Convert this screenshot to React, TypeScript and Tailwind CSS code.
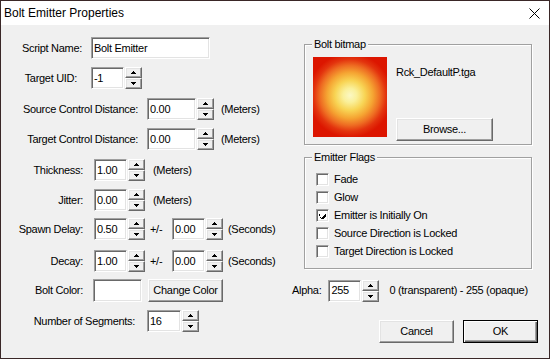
import React from 'react';

const font = "font-['Liberation_Sans',Arial,sans-serif]";

function Arrow({ down }: { down?: boolean }) {
  return (
    <svg width="5" height="3" viewBox="0 0 5 3" shapeRendering="crispEdges">
      {down ? (
        <>
          <rect x="0" y="0" width="5" height="1" fill="#000" />
          <rect x="1" y="1" width="3" height="1" fill="#000" />
          <rect x="2" y="2" width="1" height="1" fill="#000" />
        </>
      ) : (
        <>
          <rect x="2" y="0" width="1" height="1" fill="#000" />
          <rect x="1" y="1" width="3" height="1" fill="#000" />
          <rect x="0" y="2" width="5" height="1" fill="#000" />
        </>
      )}
    </svg>
  );
}

const raised =
  'bg-[#f0f0f0] border border-t-white border-l-white border-r-[#696969] border-b-[#696969] shadow-[inset_-1px_-1px_0_#a0a0a0,inset_1px_1px_0_#e3e3e3]';
const sunken =
  'bg-white border border-t-[#a0a0a0] border-l-[#a0a0a0] border-r-white border-b-white shadow-[inset_1px_1px_0_#696969,inset_-1px_-1px_0_#e3e3e3]';

function Spinner() {
  return (
    <div className="ml-[1px] flex h-[22px] w-[17px] flex-col">
      <div className={`${raised} flex h-[11px] items-center justify-center`}>
        <Arrow />
      </div>
      <div className={`${raised} flex h-[11px] items-center justify-center`}>
        <Arrow down />
      </div>
    </div>
  );
}

function Edit({ value, w }: { value: string; w: string }) {
  return (
    <div className={`${sunken} ${w} flex h-[22px] items-center pl-[2px] leading-none`}>
      {value}
    </div>
  );
}

function Button({ children, w, def }: { children: React.ReactNode; w: string; def?: boolean }) {
  return (
    <div
      className={`${w} flex h-[23px] items-center justify-center ${
        def
          ? 'border border-black bg-[#f0f0f0] shadow-[inset_1px_1px_0_#fff,inset_-1px_-1px_0_#696969,inset_-2px_-2px_0_#a0a0a0]'
          : raised
      }`}
    >
      {children}
    </div>
  );
}

function Check({ label, checked }: { label: string; checked?: boolean }) {
  return (
    <div className="flex h-[18px] items-center">
      <div className={`${sunken} flex h-[13px] w-[13px] items-center justify-center`}>
        {checked && (
          <svg width="7" height="7" viewBox="0 0 7 7" shapeRendering="crispEdges">
            <path d="M0 2h1v3h1v1h1v-1h1v-1h1v-1h1v-1h1v3h-1v1h-1v1h-1v1h-1v-1h-1v-1h-1z" fill="#000" />
          </svg>
        )}
      </div>
      <span className="ml-[5px]">{label}</span>
    </div>
  );
}

function Group({ title, className, children }: { title: string; className: string; children: React.ReactNode }) {
  return (
    <div className={`relative ml-[12px] w-[228px] border border-[#a0a0a0] shadow-[inset_1px_1px_0_#fff,1px_1px_0_#fff] ${className}`}>
      <span className="absolute left-[7px] top-[-8px] bg-[#f0f0f0] px-[2px] leading-[14px]">{title}</span>
      {children}
    </div>
  );
}

export default function App() {
  return (
    <div className={`${font} h-[359px] w-[550px] border border-[#3a2727] bg-[#f0f0f0] text-[11px] tracking-[-0.3px] text-black`}>
      {/* title bar */}
      <div className="flex h-[24px] items-center justify-between bg-white pl-[3px] pr-[9px]">
        <span className="text-[12px] tracking-normal">Bolt Emitter Properties</span>
        <svg width="11" height="11" viewBox="0 0 11 11">
          <path d="M0.5 0.5L10.5 10.5M10.5 0.5L0.5 10.5" stroke="#000" strokeWidth="1" />
        </svg>
      </div>

      <div className="flex">
        {/* left column */}
        <div className="w-[291px] pt-[12px]">
          <div className="flex h-[22px] items-center">
            <span className="w-[81px] text-right">Script Name:</span>
            <div className="ml-[9px]"><Edit value="Bolt Emitter" w="w-[119px]" /></div>
          </div>
          <div className="mt-[8px] flex h-[22px] items-center">
            <span className="w-[76px] text-right">Target UID:</span>
            <div className="ml-[14px]"><Edit value="-1" w="w-[33px]" /></div>
            <Spinner />
          </div>
          <div className="mt-[9px] flex h-[22px] items-center">
            <span className="w-[137px] text-right">Source Control Distance:</span>
            <div className="ml-[9px]"><Edit value="0.00" w="w-[49px]" /></div>
            <Spinner />
            <span className="ml-[7px]">(Meters)</span>
          </div>
          <div className="mt-[8px] flex h-[22px] items-center">
            <span className="w-[137px] text-right">Target Control Distance:</span>
            <div className="ml-[9px]"><Edit value="0.00" w="w-[49px]" /></div>
            <Spinner />
            <span className="ml-[7px]">(Meters)</span>
          </div>
          <div className="mt-[9px] flex h-[22px] items-center">
            <span className="w-[82px] text-right">Thickness:</span>
            <div className="ml-[11px]"><Edit value="1.00" w="w-[33px]" /></div>
            <Spinner />
            <span className="ml-[8px]">(Meters)</span>
          </div>
          <div className="mt-[8px] flex h-[22px] items-center">
            <span className="w-[82px] text-right">Jitter:</span>
            <div className="ml-[11px]"><Edit value="0.00" w="w-[33px]" /></div>
            <Spinner />
            <span className="ml-[8px]">(Meters)</span>
          </div>
          <div className="mt-[7px] flex h-[22px] items-center">
            <span className="w-[82px] text-right">Spawn Delay:</span>
            <div className="ml-[11px]"><Edit value="0.50" w="w-[33px]" /></div>
            <Spinner />
            <span className="ml-[5px] w-[12px]">+/-</span>
            <div className="ml-[10px]"><Edit value="0.00" w="w-[33px]" /></div>
            <Spinner />
            <span className="ml-[5px]">(Seconds)</span>
          </div>
          <div className="mt-[10px] flex h-[22px] items-center">
            <span className="w-[82px] text-right">Decay:</span>
            <div className="ml-[11px]"><Edit value="1.00" w="w-[33px]" /></div>
            <Spinner />
            <span className="ml-[5px] w-[12px]">+/-</span>
            <div className="ml-[10px]"><Edit value="0.00" w="w-[33px]" /></div>
            <Spinner />
            <span className="ml-[5px]">(Seconds)</span>
          </div>
          <div className="mt-[7px] flex h-[23px] items-center">
            <span className="w-[82px] text-right">Bolt Color:</span>
            <div className={`${sunken} ml-[10px] h-[23px] w-[49px]`} />
            <div className="ml-[6px]"><Button w="w-[75px]">Change Color</Button></div>
          </div>
          <div className="mt-[8px] flex h-[22px] items-center">
            <span className="w-[134px] text-right">Number of Segments:</span>
            <div className="ml-[12px]"><Edit value="16" w="w-[34px]" /></div>
            <Spinner />
          </div>
        </div>

        {/* right column */}
        <div className="flex-1">
          <Group title="Bolt bitmap" className="mt-[19px] h-[101px]">
            <div className="flex pl-[8px] pt-[12px]">
              <div className="h-[80px] w-[74px] bg-[radial-gradient(circle_at_50%_48%,#fbf8c4_0px,#faf09a_7px,#f8d454_15px,#f5a432_23px,#ee6c22_30px,#e3340e_36px,#dc1600_42px,#dc1400_100%)]" />
              <div className="ml-[9px] flex flex-col">
                <span className="mt-[7px]">Rck_DefaultP.tga</span>
                <div className="mt-[37px]"><Button w="w-[97px]">Browse...</Button></div>
              </div>
            </div>
          </Group>
          <Group title="Emitter Flags" className="mt-[12px] h-[112px]">
            <div className="pl-[11px] pt-[12px]">
              <Check label="Fade" />
              <Check label="Glow" />
              <Check label="Emitter is Initially On" checked />
              <Check label="Source Direction is Locked" />
              <Check label="Target Direction is Locked" />
            </div>
          </Group>
          <div className="mt-[10px] flex h-[23px] items-center">
            <span>Alpha:</span>
            <div className="ml-[7px]"><Edit value="255" w="w-[33px]" /></div>
            <Spinner />
            <span className="ml-[10px]">0 (transparent) - 255 (opaque)</span>
          </div>
          <div className="mt-[18px] flex">
            <div className="ml-[87px]"><Button w="w-[75px]">Cancel</Button></div>
            <div className="ml-[9px]"><Button w="w-[75px]" def>OK</Button></div>
          </div>
        </div>
      </div>
    </div>
  );
}
